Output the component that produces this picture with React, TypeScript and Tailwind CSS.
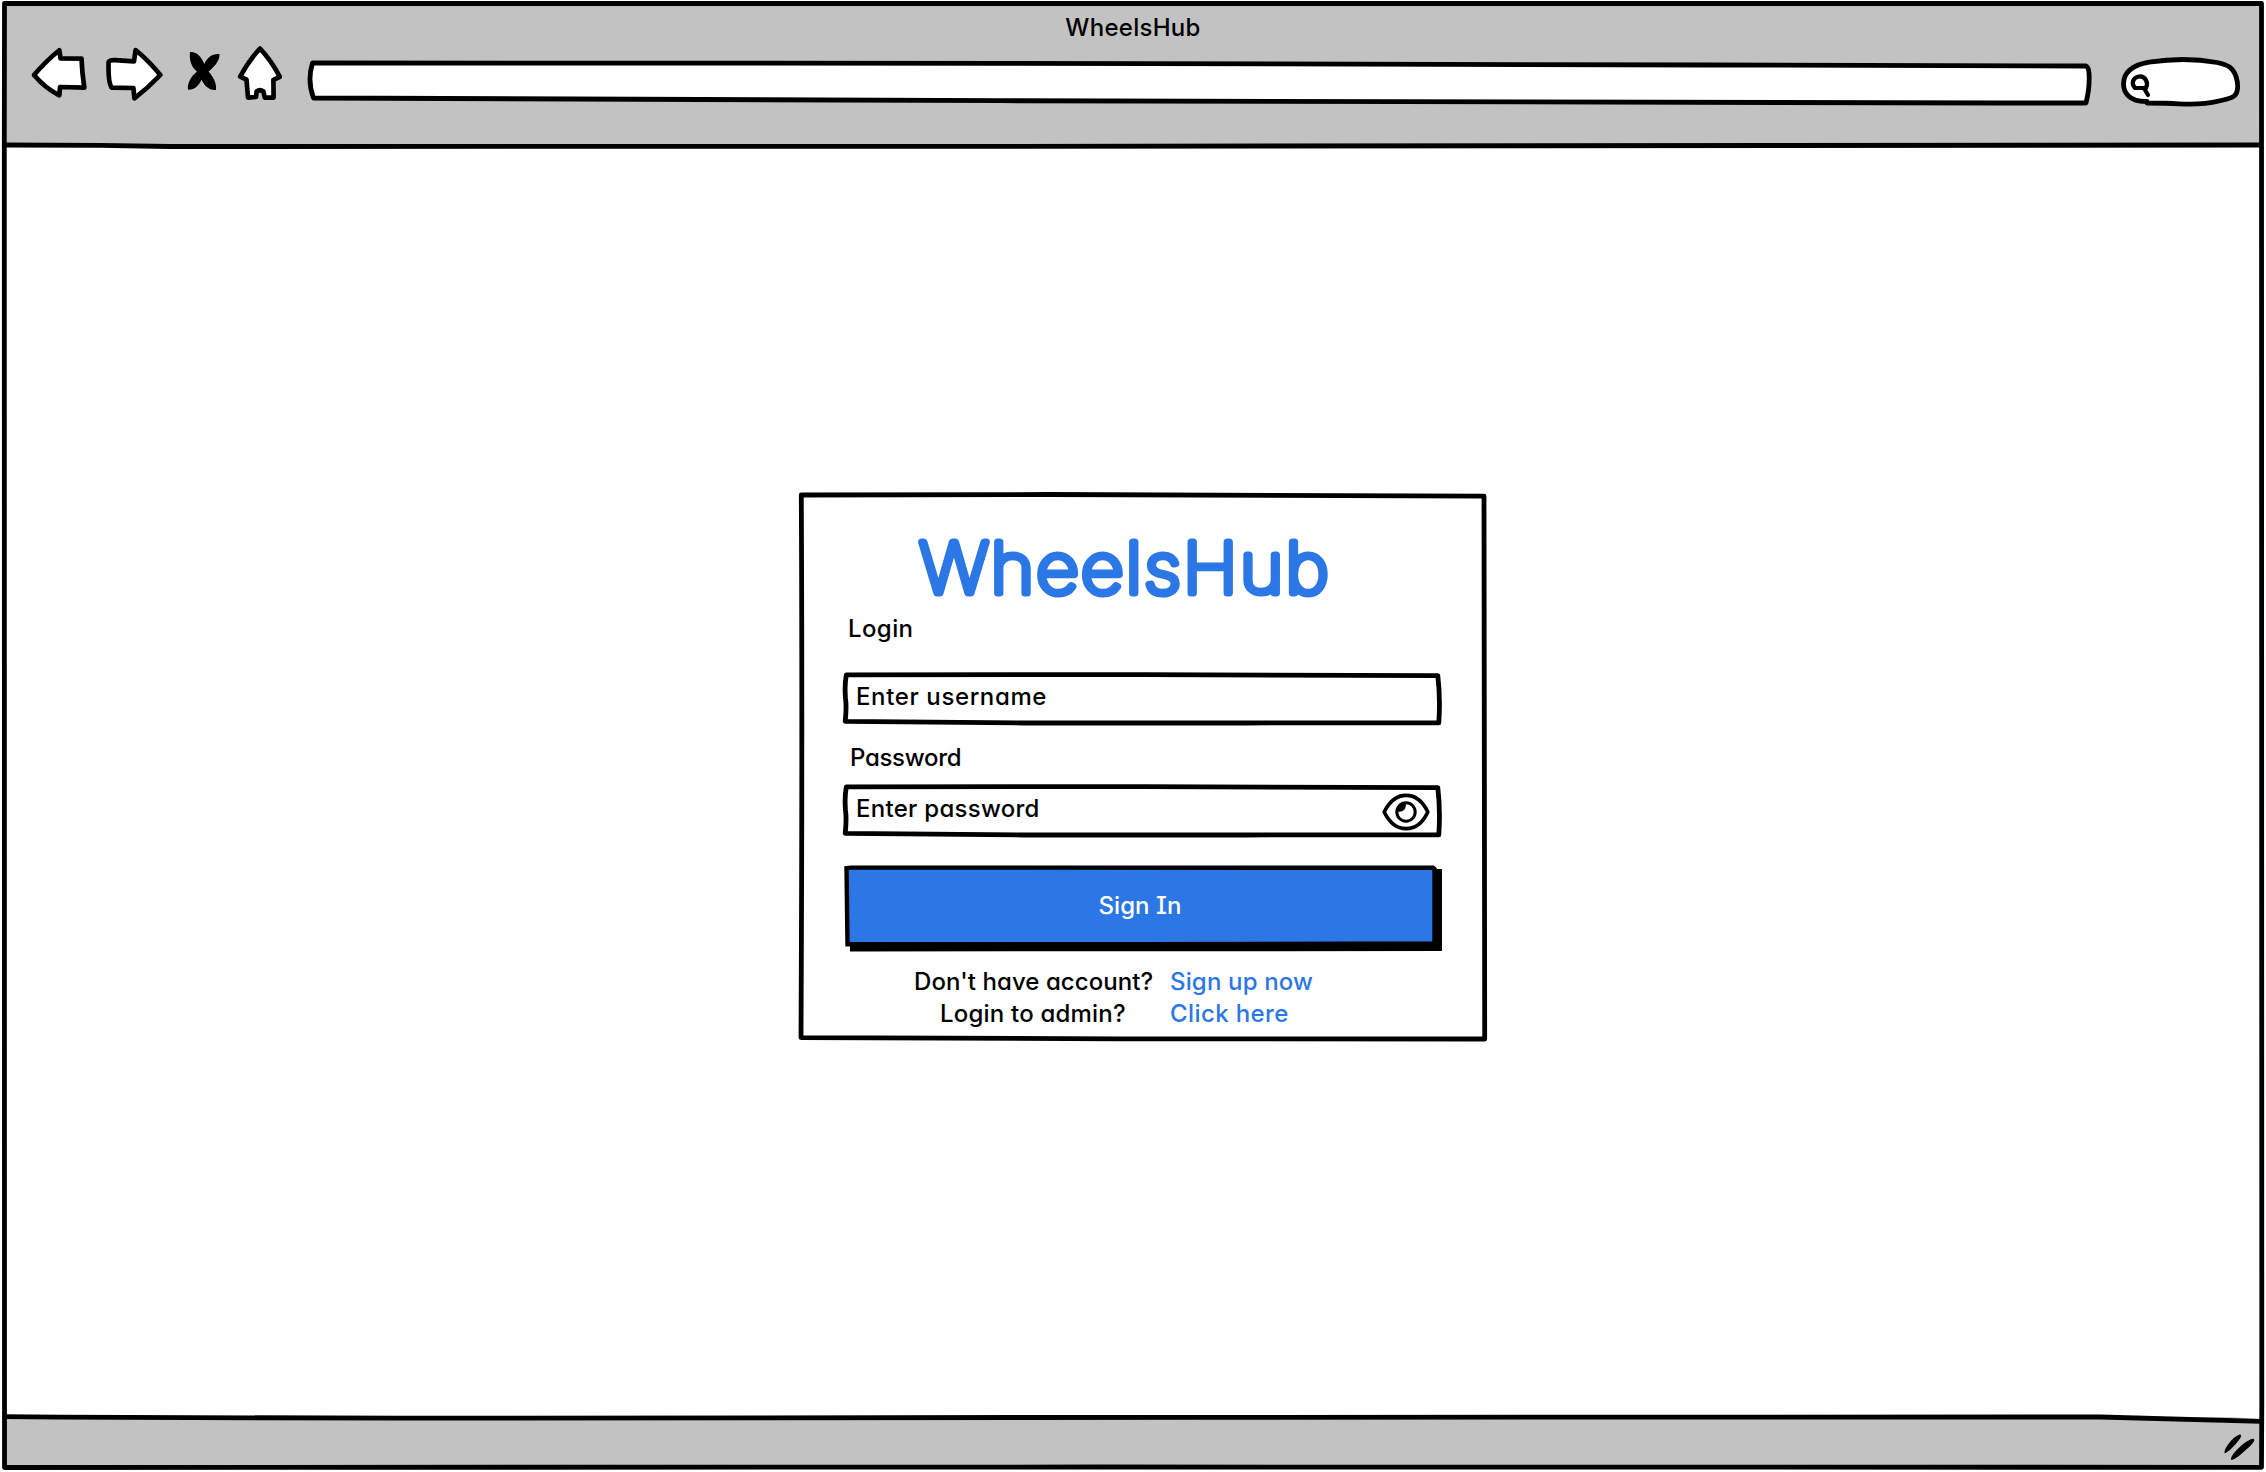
import type { ReactNode } from "react";

/* Hand-drawn outline laid over a box; coordinates are in the box's own pixels. */
function Sketch({ w, h, children }: { w: number; h: number; children: ReactNode }) {
  return (
    <svg
      className="pointer-events-none absolute top-0 left-0 overflow-visible"
      width={w}
      height={h}
      viewBox={`0 0 ${w} ${h}`}
      fill="none"
      stroke="black"
      strokeWidth={4.8}
      strokeLinejoin="round"
      strokeLinecap="round"
      aria-hidden="true"
    >
      {children}
    </svg>
  );
}

function NavIcons() {
  return (
    <svg
      className="h-[56px] w-[252px]"
      viewBox="30 45 252 56"
      fill="white"
      stroke="black"
      strokeWidth={4.7}
      strokeLinejoin="round"
      aria-hidden="true"
    >
      <path d="M34 75 Q46 61 59.3 50.2 L60.5 58.3 L81.5 58.6 Q82 72 84.3 87.6 L60 87 L59.3 95.4 Q45 88 34 75Z" />
      <path d="M108.6 62 Q110 59.8 115 60.2 L134 61.3 L135.6 50 Q149 61 160.3 75 Q148 88 134.4 98.3 L133.4 88 L111.5 87.6 Q108 82 108.6 62Z" />
      <path
        d="M190 52 C197 51.500 201.500 57 204.3 64 C207 57.500 212 53.500 219.500 54 C220 61 213.500 67.500 208.500 71.500 C212 75.500 217 82 216 90 C208.500 90.500 204 85 201.500 79.500 C199 85.500 195 90 188 89.800 C187 82.500 192 75.500 197 71.500 C191.500 67.500 189 60 190 52Z"
        fill="black"
        stroke="none"
      />
      <path d="M260 48.6 Q249 60 240.2 76.6 L246.5 79.6 L248 97.6 L256 97 L256.6 91.5 Q260 89 263.4 91.5 L264.8 97.6 L273.6 97.6 L273.4 79.8 L279.8 76.8 Q271 60 260 48.6Z" />
    </svg>
  );
}

function BrowserBar() {
  return (
    <header className="relative h-[145px] bg-[#c2c2c2] text-black [clip-path:inset(3px_4px_0_4px)]">
      <div className="flex h-[45px] items-start justify-center pt-[12px]">
        <span className="text-2xl leading-8 font-medium tracking-[0.27px]">WheelsHub</span>
      </div>
      <div className="flex items-start pl-[30px]">
        <NavIcons />
        <div className="relative mt-[16px] ml-[27px] h-[42px] w-[1782px]">
          <Sketch w={1782} h={42}>
            <path
              d="M3.5 2 L691 2.3 L1400 4 L1777 5 Q1779.5 6 1780 12 Q1781 26 1777 42 L1691 42 L691 39.7 L4.5 37 Q-2 20 3.5 2Z"
              fill="white"
            />
          </Sketch>
        </div>
        <div className="relative mt-[12px] ml-[30px] h-[48px] w-[120px]">
          <Sketch w={120} h={48}>
            <path
              d="M26 44.500 C8 45 2.5 35 2.5 27 C2.5 15 12 8 28 5.200 C50 1.800 76 1.800 96 5.500 C108 8 112 11 115 19.500 C117 26 117.500 31 115.500 36 C113.500 41 108 41.500 98 44 C82 47.800 70 47.500 58 46.800 C46 46 36 46 26 46"
              fill="white"
            />
            <g strokeWidth={4.2}>
              <path d="M14 31 C10 27 11.500 20.500 18 19.500 C25 19 27.500 26 25 31 Z" />
              <path d="M23.500 32 L27 38" />
            </g>
          </Sketch>
        </div>
      </div>
    </header>
  );
}

function Field({ text, tracking, children }: { text: string; tracking: string; children?: ReactNode }) {
  return (
    <div className="relative flex h-[53px] w-[600px] items-start pt-[9px] pl-[13px]">
      <Sketch w={600} h={53}>
        <path
          d="M3.300 2.800 L300 2.600 L594.800 3.600 Q597.500 26 595.800 50.800 L400 51 L180 51 L2.200 49.300 Q3.700 36 2.500 26 Q1.400 14 3.300 2.800Z"
          fill="white"
        />
      </Sketch>
      <span className={`relative text-2xl leading-8 font-medium ${tracking}`}>{text}</span>
      {children}
    </div>
  );
}

function EyeIcon() {
  return (
    <svg
      className="absolute top-[9px] right-[12px] h-[38px] w-[50px]"
      viewBox="0 0 50 38"
      fill="none"
      stroke="black"
      strokeWidth={3.7}
      strokeLinejoin="round"
      aria-hidden="true"
    >
      <path d="M3.200 19 C14 -3.200 36.500 -3.200 46.800 19 C36.500 41.200 14 41.200 3.200 19Z" />
      <circle cx="25" cy="19" r="9.200" strokeWidth={3} />
      <path d="M24.800 10.500 C25.500 16 22 19.500 16.800 18.500 C17 13.500 20 10.500 24.800 10.500Z" fill="black" stroke="none" />
    </svg>
  );
}

function Logo() {
  return (
    <svg className="h-[76px] w-[440px] overflow-visible" viewBox="908 528 440 76" role="img" aria-label="WheelsHub">
      <text
        transform="translate(919.5 593.4) scale(1.06 1)"
        textLength="386"
        fill="#2b77e5"
        stroke="#2b77e5"
        strokeWidth={7.2}
        strokeLinejoin="round"
        className="font-['Inter'] text-[70px] font-thin"
      >
        WheelsHub
      </text>
    </svg>
  );
}

function LoginCard() {
  return (
    <section className="relative mt-[347px] ml-[799px] flex h-[549px] w-[688px] flex-col">
      <Sketch w={688} h={549}>
        <path
          d="M2.300 3 L250 2.500 L685 4.200 Q684.700 200 685.700 547 L320 546.800 L2 545.600 Q3.500 250 2.300 3Z"
          fill="white"
        />
      </Sketch>
      <div className="relative flex flex-col pl-[44px]">
        <div className="mt-[36px] ml-[65px] h-[76px]">
          <Logo />
        </div>
        <label className="ml-[5px] h-[68px] pt-[9px] text-2xl leading-8 font-medium tracking-[0.4px]">Login</label>
        <Field text="Enter username" tracking="tracking-[0.62px]" />
        <label className="mt-[17px] ml-[7px] h-[42px] text-2xl leading-8 font-medium tracking-[-0.3px]">Password</label>
        <Field text="Enter password" tracking="tracking-[0.28px]">
          <EyeIcon />
        </Field>
        <button className="relative mt-[28px] flex h-[86px] w-[594px] justify-center pt-[25px]">
          <Sketch w={594} h={86}>
            <path d="M7 4 H599 V86 L7 86.500Z" fill="black" stroke="none" />
            <path
              d="M3.500 3.200 L8 2.600 L590 2.800 L591.500 4 L591.500 78.500 L300 79.300 L4.500 79.300Z"
              fill="#2b77e5"
              strokeWidth={4.4}
              strokeLinejoin="miter"
            />
          </Sketch>
          <span className="relative text-2xl leading-8 font-medium tracking-[0.07px] text-white">Sign In</span>
        </button>
        <div className="mt-[15px] ml-[71px] grid h-[64px] grid-cols-[256px_auto] text-2xl leading-8 font-medium">
          <span className="tracking-[0.06px]">Don't have account?</span>
          <a className="tracking-[0.16px] text-[#2b77e5]">Sign up now</a>
          <span className="pl-[26px] tracking-[0.2px]">Login to admin?</span>
          <a className="tracking-[0.4px] text-[#2b77e5]">Click here</a>
        </div>
      </div>
    </section>
  );
}

export default function App() {
  return (
    <div className="relative flex h-[1472px] w-[2266px] flex-col overflow-hidden bg-white font-['Inter',sans-serif] text-black [font-feature-settings:'cv11','cv08']">
      <BrowserBar />
      <main className="flex-1">
        <LoginCard />
      </main>
      <footer className="relative mr-[4px] mb-[4px] ml-[4px] flex h-[51px] items-start justify-end bg-[#c2c2c2] pt-[15px] pr-[4px]">
        <svg className="h-[30px] w-[36px]" viewBox="2221 1432 36 30" aria-hidden="true">
          <path d="M2223.500 1453 C2223 1447 2234 1435 2239 1434.500 C2243 1435 2235 1444 2232 1447 C2229 1450 2225 1453.500 2223.500 1453Z" />
          <path d="M2230.300 1460 C2228 1455 2246 1439 2252 1438.700 C2257 1440 2246 1449 2242 1452.500 C2238 1456 2233 1460 2230.300 1460Z" />
        </svg>
      </footer>
      <svg className="pointer-events-none absolute top-0 left-0 h-[1472px] w-[2266px]" viewBox="0 0 2266 1472" aria-hidden="true">
        <path d="M2200 1415 L2259 1416 V1419 Z" fill="white" />
        <g fill="none" stroke="black" strokeWidth={4.8} strokeLinejoin="round">
          <path d="M4.500 3.500 H2261.500 Q2260 700 2261.800 1400 L2261.500 1467.300 L1100 1467 L4.500 1467.500 V1400 Q3.200 700 4.300 140Z" />
          <path d="M4 145 L100 145.300 L170 146.500 L1000 146.300 L2261 145" />
          <path d="M4 1416.700 L60 1417.200 L400 1418.200 L1200 1417.300 L2100 1417 L2261 1421.300" />
        </g>
      </svg>
    </div>
  );
}
